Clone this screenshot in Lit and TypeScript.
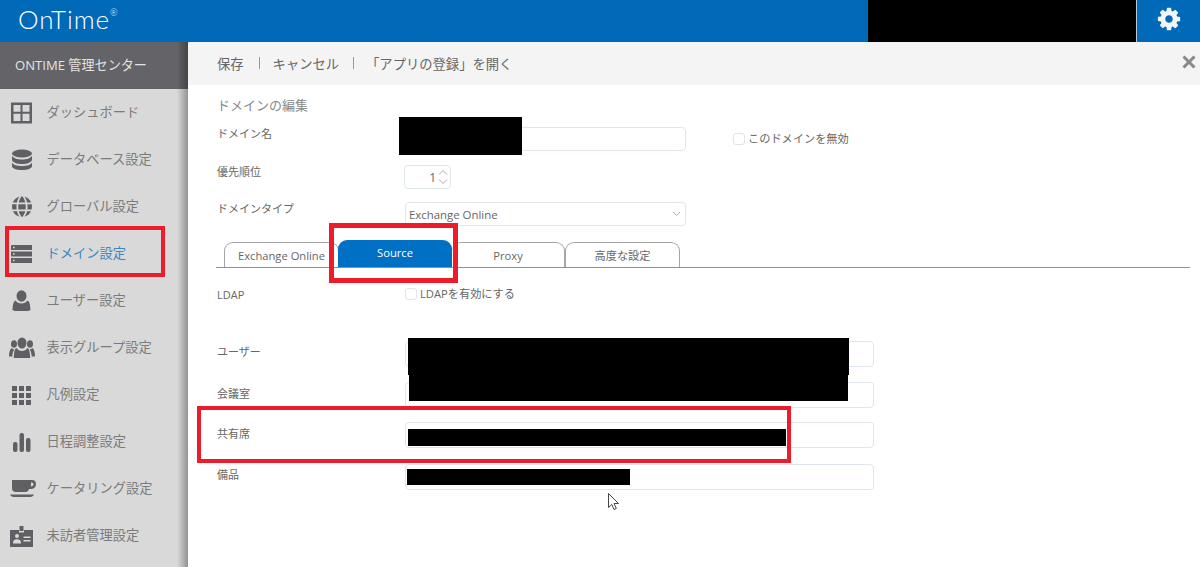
import { LitElement, html, css, svg } from "lit";
import { customElement } from "lit/decorators.js";

const ICONS: Record<string, unknown> = {
  dash: svg`<path fill-rule="evenodd" d="M1 1.500h21v21H1zM3.500 4v6.700h7V4zM12.500 4v6.700h7V4zM3.500 12.800V20h7v-7.200zM12.500 12.800V20h7v-7.200z"/>`,
  db: svg`<ellipse cx="11" cy="5.500" rx="10" ry="4"/><path d="M1 8c1 2.500 5 4 10 4s9-1.500 10-4v4.500c-1 2.500-5 4-10 4s-9-1.500-10-4z" transform="translate(0 -.5)"/><path d="M1 14.500c1 2.500 5 3.500 10 3.500s9-1 10-3.500V18c0 2.500-4.500 4-10 4S1 20.500 1 18z"/>`,
  globe: svg`<path d="M8.500 1.500C5.500 2.500 3 4.500 1.800 7.500H6c.5-2.500 1.300-4.500 2.500-6zM13.500 1.500c1.200 1.500 2 3.500 2.500 6h4.200c-1.200-3-3.700-5-6.700-6zM11 1c-1.500 1.500-2.700 3.800-3.200 6.500h6.400C13.700 4.800 12.500 2.500 11 1zM1.200 9.200C.9 10.800 1 12.800 1.400 14.500h4.200C5.400 12.800 5.400 10.800 5.600 9.200zM7.400 9.200c-.2 1.700-.2 3.600 0 5.300h7.200c.2-1.700.2-3.600 0-5.300zM16.400 9.200c.2 1.600.2 3.600 0 5.300h4.200c.4-1.700.5-3.700.2-5.300zM1.900 16.300c1.200 2.700 3.600 4.500 6.600 5.400-1.200-1.500-2-3.400-2.500-5.400zM7.800 16.300c.5 2.400 1.700 4.500 3.200 5.900 1.500-1.400 2.700-3.500 3.200-5.900zM16 16.300c-.5 2-1.300 3.900-2.500 5.400 3-.9 5.400-2.700 6.600-5.400z"/>`,
  server: svg`<path fill-rule="evenodd" d="M0 3h21v5H0zM2 4.700v1.600h1.600V4.700zM0 9.500h21v5H0zM2 11.200v1.600h1.600v-1.600zM0 16h21v5H0zM2 17.700v1.600h1.600v-1.600z"/>`,
  user: svg`<ellipse cx="11.500" cy="7" rx="5" ry="5.800"/><path d="M5.500 11.500c1.500 2 3.500 3 6 3s4.500-1 6-3c1.800.8 2.700 3.500 3 9.500-1 .6-2 1-3 1H5.500c-1 0-2-.4-3-1 .3-6 1.200-8.700 3-9.500z"/>`,
  users: svg`<ellipse cx="13" cy="7" rx="4.500" ry="5.500"/><path d="M7.500 12c1.500 2 3.200 3 5.500 3s4-1 5.500-3c1.800.8 2.500 4 2.700 10H4.800c.2-6 .9-9.200 2.700-10z"/><ellipse cx="5" cy="8" rx="3" ry="3.800"/><path d="M2.500 12c.8.800 1.500 1.200 3 1.300-1.500 1.700-2 4-2.200 7.200H0c0-4 .9-7.500 2.500-8.500z"/><ellipse cx="21" cy="8" rx="3" ry="3.800"/><path d="M23.500 12c-.8.800-1.500 1.200-3 1.300 1.500 1.700 2 4 2.200 7.200H26c0-4-.9-7.500-2.500-8.500z"/>`,
  grid: svg`<path d="M3 3h5v5H3zM10 3h5v5h-5zM17 3h5v5h-5zM3 10h5v5H3zM10 10h5v5h-5zM17 10h5v5h-5zM3 17h5v5H3zM10 17h5v5h-5zM17 17h5v5h-5z"/>`,
  bars: svg`<rect x="4" y="12" width="4.500" height="10" rx="2"/><rect x="10.500" y="3" width="4.500" height="19" rx="2"/><rect x="17" y="8" width="4.500" height="14" rx="2"/>`,
  cup: svg`<path fill-rule="evenodd" d="M4 3h20c3 0 4 2 4 4s-1.500 5-4.500 5H21c-.5 2-1.500 3-3.500 3H8c-3 0-4-1.500-4-4zM23 5.500V9.500c1.500 0 2.500-1 2.500-2.500 0-1-1-1.500-2.500-1.500z"/><path d="M2 17.500h24c-.5 1.500-2 2.500-4 2.500H6c-2 0-3.500-1-4-2.500z"/>`,
  badge: svg`<path fill-rule="evenodd" d="M1 6h9v2.500h5V6h9v17H1zM6 12a2 2 0 1 0 4 0a2 2 0 1 0-4 0zM4 19.500h8c0-3-1-4.300-4-4.300s-4 1.300-4 4.300zM14.500 12.500v1.500h7v-1.500zM14.500 16v1.500h7V16zM10.500 2h4v5h-4z"/>`,
};

const NAV: { icon: string; label: string; w: number; active?: boolean }[] = [
  { icon: "dash", label: "ダッシュボード", w: 23 },
  { icon: "db", label: "データベース設定", w: 22 },
  { icon: "globe", label: "グローバル設定", w: 22 },
  { icon: "server", label: "ドメイン設定", w: 21, active: true },
  { icon: "user", label: "ユーザー設定", w: 23 },
  { icon: "users", label: "表示グループ設定", w: 26 },
  { icon: "grid", label: "凡例設定", w: 25 },
  { icon: "bars", label: "日程調整設定", w: 25 },
  { icon: "cup", label: "ケータリング設定", w: 28 },
  { icon: "badge", label: "未訪者管理設定", w: 25 },
];

const GEAR =
  "M1152 896q0-106-75-181t-181-75-181 75-75 181 75 181 181 75 181-75 75-181zm512-109v222q0 12-8 23t-20 13l-185 28q-19 54-39 91 35 50 107 138 10 12 10 25t-9 23q-27 37-99 108t-94 71q-12 0-26-9l-138-108q-44 23-91 38-16 136-29 186-7 28-36 28h-222q-14 0-24.500-8.500t-11.500-21.500l-28-184q-49-16-90-37l-141 107q-10 9-25 9-14 0-25-11-126-114-165-168-7-10-7-23 0-12 8-23 15-21 51-66.500t54-70.500q-27-50-41-99l-183-27q-13-2-21-12.500t-8-23.500v-222q0-12 8-23t19-13l186-28q14-46 39-92-40-57-107-138-10-12-10-24 0-10 9-23 26-36 98.500-107.500t94.500-71.500q13 0 26 10l138 107q44-23 91-38 16-136 29-186 7-28 36-28h222q14 0 24.500 8.500t11.500 21.500l28 184q49 16 90 37l142-107q9-9 24-9 13 0 25 10 129 119 165 170 7 8 7 22 0 12-8 23-15 21-51 66.500t-54 70.500q26 50 41 98l183 28q13 2 21 12.500t8 23.500z";

@customElement("app-root")
export class AppRoot extends LitElement {
  static styles = css`
    :host {
      display: block;
      position: relative;
      width: 1200px;
      height: 567px;
      overflow: hidden;
      background: #fff;
      color: #666;
      font-family: "Open Sans", "Noto Sans CJK JP", sans-serif;
    }
    .top {
      display: flex;
      height: 42px;
      background: #0069b8;
    }
    .logo {
      margin-left: 18px;
      font-family: "Lato", sans-serif;
      font-weight: 300;
      font-size: 26px;
      line-height: 39px;
      letter-spacing: 0.9px;
      color: #fff;
      display: flex;
    }
    .logo sup {
      font-size: 9px;
      line-height: 10px;
      margin: 8px 0 0 0;
      letter-spacing: 0;
    }
    .top-space { flex: 1; }
    .redact-top { width: 268px; background: #000; }
    .gear {
      width: 64px;
      border-left: 1px solid #b9c9d8;
      display: flex;
      align-items: center;
      justify-content: center;
      padding-bottom: 4px;
      box-sizing: border-box;
    }
    .gear svg { width: 26px; height: 26px; fill: #f1f4f8; }
    .body { display: flex; height: 525px; background: #d9d9d9; }
    .side {
      width: 188px;
      flex: none;
      background: #d9d9d9;
      position: relative;
    }
    .side::after {
      content: "";
      position: absolute;
      inset: 0 0 0 auto;
      width: 11px;
      background: linear-gradient(to right, rgba(0,0,0,0), rgba(0,0,0,0.32));
    }
    .side-title {
      height: 47px;
      background: #636368;
      color: #e3e3e3;
      font-size: 13.1px;
      line-height: 47px;
      padding-left: 15px;
    }
    .nav-item {
      display: flex;
      align-items: center;
      height: 47px;
      color: #7b7b7b;
      font-size: 13.25px;
    }
    .nav-item span:last-child { margin-top: -2px; }
    .nav-item.active { color: #3c86c4; }
    .nav-icon {
      width: 46.500px;
      flex: none;
      display: flex;
      justify-content: center;
      padding-right: 3px;
      box-sizing: border-box;
    }
    .nav-icon svg { fill: #606064; height: 24px; display: block; }
    .main {
      flex: 1;
      background: #fff;
      border-top-left-radius: 4px;
      overflow: hidden;
    }
    .toolbar {
      display: flex;
      align-items: center;
      height: 43px;
      box-sizing: border-box;
      padding: 0 4px 1px 29px;
      background: #f4f4f4;
      font-size: 13.3px;
      color: #666;
    }
    .sep {
      width: 1px;
      height: 12px;
      background: #999;
      margin: 0 13px 0 15px;
    }
    .sep.wide { margin: 0 12.500px 0 13.500px; }
    .close { margin: 0 0 3px auto; display: flex; }
    .close svg { width: 14px; height: 14px; stroke: #888; stroke-width: 3; }
    .form { padding: 11px 10px 0 29px; font-size: 11px; }
    .heading { font-size: 13px; line-height: 18px; color: #888; margin-bottom: 13px; }
    .row { display: flex; align-items: flex-start; }
    .label { width: 188px; flex: none; line-height: 14px; color: #666; }
    .input {
      box-sizing: border-box;
      height: 24px;
      border: 1px solid #dfe5ee;
      border-radius: 4px;
      background: #fff;
    }
    .r-name { margin-bottom: 14px; }
    .r-name .input { width: 281px; }
    .r-prio { margin-bottom: 13px; }
    .check-wrap {
      display: flex;
      align-items: center;
      margin: 5px 0 0 47px;
      color: #666;
      font-size: 11.2px;
    }
    .check-text { margin-top: -2px; }
    .box {
      width: 12px;
      height: 12px;
      box-sizing: border-box;
      border: 1px solid #dfe5ee;
      border-radius: 3px;
      margin-right: 3px;
      background: #fff;
    }
    .spin {
      width: 47px;
      display: flex;
      justify-content: flex-end;
      align-items: center;
      color: #666;
      font-size: 12px;
      margin-left: -1px;
    }
    .spin svg { width: 12px; height: 18px; margin: 0 1px 0 1px; stroke: #aaa; fill: none; }
    .select {
      width: 281px;
      display: flex;
      align-items: center;
      justify-content: space-between;
      padding: 0 4px 0 3px;
      font-size: 11.4px;
      color: #666;
    }
    .select svg { width: 9px; height: 6px; stroke: #aaa; fill: none; }
    .tabs {
      display: flex;
      align-items: flex-end;
      height: 27px;
      margin: 14px 0 0 -1px;
      padding-left: 8px;
      border-bottom: 1px solid #8f8f8f;
    }
    .tab {
      box-sizing: border-box;
      height: 25px;
      border: 1px solid #a6a6a6;
      border-bottom: 0;
      border-radius: 9px 9px 0 0;
      text-align: center;
      line-height: 25px;
      font-size: 11.2px;
      color: #666;
    }
    .tab.t1 { width: 115px; }
    .tab.t2 {
      width: 114px;
      height: 27px;
      margin-left: -1px;
      background: #0070c4;
      border: 0;
      color: #fff;
      line-height: 25px;
      position: relative;
    }
    .tab.t3 { width: 113px; border-left: 0; }
    .tab.t4 { width: 115px; }
    .r-ldap { margin: 20px 0 39px; height: 14px; }
    .r-ldap .check-wrap { margin: -1px 0 0 0; }
    .field { margin-bottom: 15px; }
    .field .label { margin-top: 4px; }
    .field .input { width: 469px; height: 26px; }
    .field.f2 { margin-bottom: 14px; }
    .field.f2 .label, .field.f3 .label { margin-top: 5px; }
    .field.f3 { margin-bottom: 16px; }
    .overlay { position: absolute; box-sizing: border-box; }
    .black { background: #000; }
    .red { border: 4px solid #ed1c2b; }
    .b1 { left: 399px; top: 117px; width: 123px; height: 38px; }
    .b2 { left: 408px; top: 338px; width: 441px; height: 37px; }
    .b3 { left: 409px; top: 375px; width: 439px; height: 26px; }
    .b4 { left: 408px; top: 429px; width: 378px; height: 17px; }
    .b5 { left: 407px; top: 469px; width: 223px; height: 16px; }
    .red1 { left: 5px; top: 226px; width: 160px; height: 51px; }
    .red2 { left: 329px; top: 223px; width: 129px; height: 60px; border-width: 5px; }
    .red3 { left: 197px; top: 406px; width: 594px; height: 57px; }
    .cursor { left: 607px; top: 492px; width: 14px; height: 20px; }
  `;

  render() {
    return html`
      <div class="top">
        <div class="logo">OnTime<sup>®</sup></div>
        <div class="top-space"></div>
        <div class="redact-top"></div>
        <div class="gear">
          <svg viewBox="0 0 1792 1792"><path d="${GEAR}"></path></svg>
        </div>
      </div>
      <div class="body">
        <aside class="side">
          <div class="side-title">ONTIME 管理センター</div>
          ${NAV.map(
            (n) => html`
              <div class="nav-item ${n.active ? "active" : ""}">
                <span class="nav-icon">
                  <svg width="${n.w}" viewBox="0 0 ${n.w} 24">${ICONS[n.icon]}</svg>
                </span>
                <span>${n.label}</span>
              </div>
            `
          )}
        </aside>
        <main class="main">
          <div class="toolbar">
            <span>保存</span><i class="sep"></i>
            <span>キャンセル</span><i class="sep wide"></i>
            <span>「アプリの登録」を開く</span>
            <span class="close">
              <svg viewBox="0 0 14 14"><path d="M1.500 1.500l11 11M12.500 1.500l-11 11"></path></svg>
            </span>
          </div>
          <div class="form">
            <div class="heading">ドメインの編集</div>
            <div class="row r-name">
              <div class="label">ドメイン名</div>
              <div class="input"></div>
              <label class="check-wrap"><span class="box"></span><span class="check-text">このドメインを無効</span></label>
            </div>
            <div class="row r-prio">
              <div class="label">優先順位</div>
              <div class="input spin">
                <span>1</span>
                <svg viewBox="0 0 12 18"><path d="M2 6.500l4-4 4 4M2 11.500l4 4 4-4"></path></svg>
              </div>
            </div>
            <div class="row r-type">
              <div class="label">ドメインタイプ</div>
              <div class="input select">
                <span>Exchange Online</span>
                <svg viewBox="0 0 9 6"><path d="M1 1l3.500 3.500L8 1"></path></svg>
              </div>
            </div>
            <div class="tabs">
              <div class="tab t1">Exchange Online</div>
              <div class="tab t2">Source</div>
              <div class="tab t3">Proxy</div>
              <div class="tab t4">高度な設定</div>
            </div>
            <div class="row r-ldap">
              <div class="label">LDAP</div>
              <label class="check-wrap"><span class="box"></span><span class="check-text">LDAPを有効にする</span></label>
            </div>
            <div class="row field"><div class="label">ユーザー</div><div class="input"></div></div>
            <div class="row field f2"><div class="label">会議室</div><div class="input"></div></div>
            <div class="row field f3"><div class="label">共有席</div><div class="input"></div></div>
            <div class="row field"><div class="label">備品</div><div class="input"></div></div>
          </div>
        </main>
      </div>
      <div class="overlay black b1"></div>
      <div class="overlay black b2"></div>
      <div class="overlay black b3"></div>
      <div class="overlay black b4"></div>
      <div class="overlay black b5"></div>
      <div class="overlay red red1"></div>
      <div class="overlay red red2"></div>
      <div class="overlay red red3"></div>
      <svg class="overlay cursor" viewBox="0 0 14 20">
        <path d="M1.500 1.500v14l3.300-3 2.200 5 2.300-1-2.200-5h4.400z" fill="#fff" stroke="#444" stroke-width="1"></path>
      </svg>
    `;
  }
}
